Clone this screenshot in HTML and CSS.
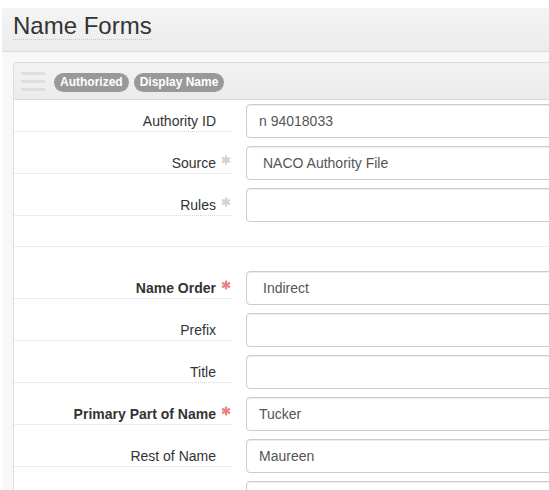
FILE: index.html
```html
<!DOCTYPE html>
<html>
<head>
<meta charset="utf-8">
<link rel="stylesheet" href="styles.css">
</head>
<body>
<div class="page">
  <div class="page-head">
    <h2 class="title"><span class="title-text">Name Forms</span></h2>
  </div>
  <div class="page-body">
    <section class="panel">
      <div class="panel-head">
        <span class="handle"><i></i><i></i><i></i></span>
        <span class="badges">
          <span class="badge">Authorized</span>
          <span class="badge">Display Name</span>
        </span>
      </div>
      <div class="panel-body">
        <div class="row">
          <label class="lbl"><span>Authority ID</span><span class="mark"></span></label>
          <input class="ctl" type="text" value="n 94018033">
        </div>
        <div class="row">
          <label class="lbl"><span>Source</span><span class="mark"><svg class="ast ast-opt" viewBox="0 0 10 10"><path d="M5 0.5V9.5M1.1 2.75L8.9 7.25M1.1 7.25L8.9 2.75"/></svg></span></label>
          <select class="ctl sel"><option>NACO Authority File</option></select>
        </div>
        <div class="row">
          <label class="lbl"><span>Rules</span><span class="mark"><svg class="ast ast-opt" viewBox="0 0 10 10"><path d="M5 0.5V9.5M1.1 2.75L8.9 7.25M1.1 7.25L8.9 2.75"/></svg></span></label>
          <select class="ctl sel"><option></option></select>
        </div>
        <hr class="sep">
        <div class="row">
          <label class="lbl strong"><span>Name Order</span><span class="mark"><svg class="ast ast-req" viewBox="0 0 10 10"><path d="M5 0.5V9.5M1.1 2.75L8.9 7.25M1.1 7.25L8.9 2.75"/></svg></span></label>
          <select class="ctl sel"><option>Indirect</option></select>
        </div>
        <div class="row">
          <label class="lbl"><span>Prefix</span><span class="mark"></span></label>
          <input class="ctl" type="text" value="">
        </div>
        <div class="row">
          <label class="lbl"><span>Title</span><span class="mark"></span></label>
          <input class="ctl" type="text" value="">
        </div>
        <div class="row">
          <label class="lbl strong"><span>Primary Part of Name</span><span class="mark"><svg class="ast ast-req" viewBox="0 0 10 10"><path d="M5 0.5V9.5M1.1 2.75L8.9 7.25M1.1 7.25L8.9 2.75"/></svg></span></label>
          <input class="ctl" type="text" value="Tucker">
        </div>
        <div class="row">
          <label class="lbl"><span>Rest of Name</span><span class="mark"></span></label>
          <input class="ctl" type="text" value="Maureen">
        </div>
        <div class="row">
          <label class="lbl"><span></span><span class="mark"></span></label>
          <input class="ctl" type="text" value="">
        </div>
      </div>
    </section>
  </div>
</div>
</body>
</html>
```

FILE: styles.css
```css
html, body {
  margin: 0;
  padding: 0;
  overflow: hidden;
  background: #fff;
}
body {
  font-family: "Liberation Sans", Arial, sans-serif;
  font-size: 14px;
  color: #333;
}
.page {
  padding-top: 8px;
  margin-left: 2px;
}
.page-head {
  height: 43px;
  background: linear-gradient(#f4f4f4, #ececec);
  border-bottom: 1px solid #dcdcdc;
  box-sizing: content-box;
}
.title {
  margin: 0;
  padding: 4px 0 0 11px;
  font-size: 24px;
  font-weight: normal;
  color: #333;
  line-height: normal;
}
.title-text {
  border-bottom: 1px dotted #c8c8c8;
}
.page-body {
  background: #f8f8f8;
  padding: 10px 0 0 11px;
  min-height: 440px;
}
.panel {
  width: 720px;
  background: #fff;
  border: 1px solid #dcdcdc;
  border-radius: 4px;
}
.panel-head {
  height: 36px;
  display: flex;
  align-items: center;
  padding-left: 7px;
  background: linear-gradient(#f3f3f3, #ebebeb);
  border-bottom: 1px solid #dcdcdc;
  border-radius: 4px 4px 0 0;
}
.handle {
  width: 24px;
  display: flex;
  flex-direction: column;
  gap: 5px;
}
.handle i {
  display: block;
  height: 3px;
  background: #dedede;
}
.badges {
  display: flex;
  gap: 5px;
  margin-left: 9px;
  padding-top: 2px;
}
.badge {
  display: inline-block;
  height: 19px;
  line-height: 19px;
  padding: 0 6px;
  border-radius: 10px;
  background: #999;
  color: #fff;
  font-size: 12px;
  font-weight: bold;
}
.panel-body {
  padding-top: 4px;
}
.row {
  display: grid;
  grid-template-columns: 217px 1fr;
  column-gap: 15px;
  margin-bottom: 8px;
  align-items: start;
}
.lbl {
  display: flex;
  justify-content: flex-end;
  padding-top: 7px;
  height: 20px;
  line-height: 20px;
  border-bottom: 1px dotted #d8d8d8;
  color: #333;
}
.lbl.strong {
  font-weight: bold;
}
.mark {
  width: 15px;
  flex-shrink: 0;
  display: flex;
  justify-content: flex-end;
  align-items: flex-start;
  padding-top: 2px;
}
.ast {
  width: 10px;
  height: 10px;
  fill: none;
  stroke-width: 2.2;
}
.ast-opt {
  stroke: #d2d2d2;
}
.ast-req {
  stroke: #ec8282;
}
.ctl {
  box-sizing: border-box;
  width: 100%;
  height: 34px;
  margin: 0;
  padding: 6px 12px;
  border: 1px solid #ccc;
  border-radius: 4px;
  background: #fff;
  box-shadow: inset 0 1px 1px rgba(0, 0, 0, 0.075);
  font-family: "Liberation Sans", Arial, sans-serif;
  font-size: 14px;
  color: #555;
  outline: none;
}
.sel {
  -webkit-appearance: none;
  appearance: none;
  padding-left: 16px;
}
.sep {
  border: 0;
  border-top: 1px solid #eee;
  margin: 24px 0 24px;
  height: 0;
}
```
